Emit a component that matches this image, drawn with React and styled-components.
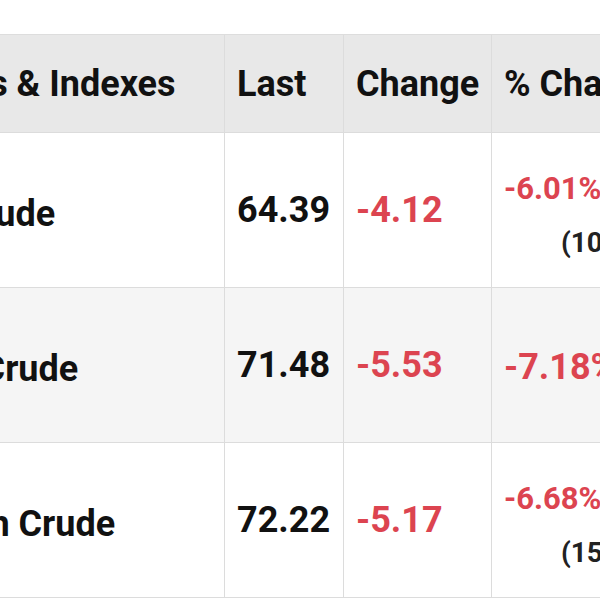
import React from "react";
import styled, { createGlobalStyle } from "styled-components";

const Global = createGlobalStyle`
  html, body { margin: 0; padding: 0; background: #ffffff; }
  body { width: 600px; height: 600px; overflow: hidden; font-family: Roboto, "Liberation Sans", Arial, sans-serif; }
`;

const Page = styled.div`
  width: 600px;
  height: 600px;
  overflow: hidden;
  padding-top: 34px;
  box-sizing: border-box;
`;

const Table = styled.div`
  display: grid;
  grid-template-columns: 349px 119px 148px 220px;
  grid-auto-rows: 155px;
  grid-template-rows: 98px;
  margin-left: -124px;
  width: 836px;
  border-top: 1px solid #dddddd;
`;

const Cell = styled.div`
  display: flex;
  align-items: center;
  box-sizing: border-box;
  padding: ${(p) => p.$pt || 0}px 10px 0 ${(p) => p.$pl || 11}px;
  border-right: 1px solid #dcdcdc;
  border-bottom: 1px solid #dcdcdc;
  background: ${(p) => (p.$head ? "#e8e8e8" : p.$alt ? "#f5f5f5" : "#ffffff")};
  color: ${(p) => (p.$red ? "#dc4450" : "#111111")};
  font-size: 36px;
  font-weight: 700;
  white-space: nowrap;
`;

const PctStack = styled.div`
  display: flex;
  flex-direction: column;
  align-items: flex-start;
`;

const PctMain = styled.span`
  color: #dc4450;
  font-size: ${(p) => (p.$small ? 31 : 36)}px;
  line-height: ${(p) => (p.$small ? 37 : 42)}px;
`;

const PctSub = styled.span`
  color: #222222;
  font-size: 28px;
  line-height: 34px;
  margin-top: 19px;
  margin-left: 57px;
`;

const rows = [
  { name: "WTI Crude", last: "64.39", change: "-4.12", pct: "-6.01%", sub: "(10:43)" },
  { name: "Brent Crude", last: "71.48", change: "-5.53", pct: "-7.18%" },
  { name: "Murban Crude", last: "72.22", change: "-5.17", pct: "-6.68%", sub: "(15:27)" },
];

export default function App() {
  return (
    <>
      <Global />
      <Page>
        <Table>
          <Cell $head $pl={9}>Futures &amp; Indexes</Cell>
          <Cell $head $pl={12}>Last</Cell>
          <Cell $head $pl={12}>Change</Cell>
          <Cell $head $pl={12}>% Change</Cell>
          {rows.map((r, i) => (
            <React.Fragment key={r.name}>
              <Cell $alt={i === 1} $pl={9} $pt={8}>{r.name}</Cell>
              <Cell $alt={i === 1} $pl={12}>{r.last}</Cell>
              <Cell $alt={i === 1} $red $pl={12}>{r.change}</Cell>
              <Cell $alt={i === 1} $pl={12} $pt={r.sub ? 10 : 4}>
                <PctStack>
                  <PctMain $small={!!r.sub}>{r.pct}</PctMain>
                  {r.sub && <PctSub>{r.sub}</PctSub>}
                </PctStack>
              </Cell>
            </React.Fragment>
          ))}
        </Table>
      </Page>
    </>
  );
}
